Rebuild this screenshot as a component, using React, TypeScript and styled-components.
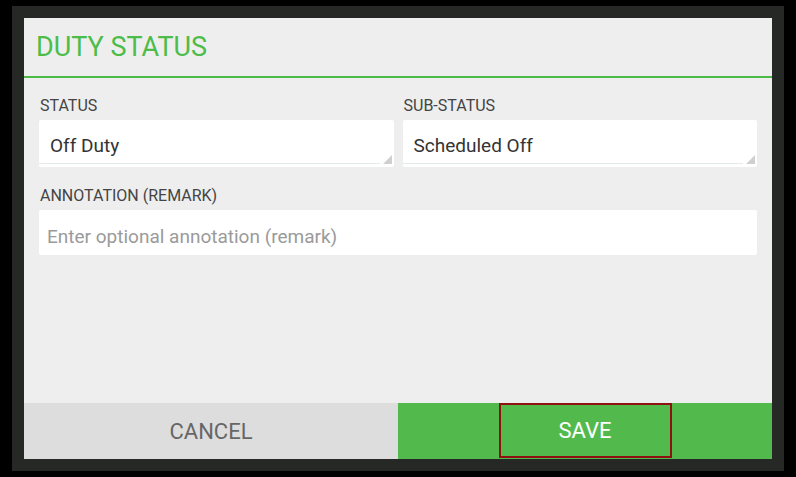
import styled, { createGlobalStyle } from 'styled-components';

const GlobalStyle = createGlobalStyle`
  html, body {
    margin: 0;
    padding: 0;
    background: #000;
    font-family: Roboto, "Liberation Sans", sans-serif;
  }
`;

const StyledScreen = styled.div`
  width: 796px;
  height: 477px;
  background: #000;
  padding: 6px 12px;
  box-sizing: border-box;
`;

const StyledFrame = styled.div`
  width: 772px;
  height: 465px;
  background: #262826;
  padding: 12px;
  box-sizing: border-box;
`;

const StyledDialog = styled.div`
  display: flex;
  flex-direction: column;
  height: 441px;
  background: #eeeeee;
`;

const StyledHeader = styled.h1`
  margin: 0;
  height: 58px;
  line-height: 58px;
  padding-left: 12px;
  border-bottom: 2px solid #4cba47;
  color: #4cbd49;
  font-size: 27px;
  font-weight: 400;
`;

const StyledBody = styled.div`
  flex: 1;
  padding: 18px 15px 0;
  display: flex;
  flex-direction: column;
  gap: 19px;
`;

const StyledRow = styled.div<{ $cols: number }>`
  display: grid;
  grid-template-columns: repeat(${({ $cols }) => $cols}, 1fr);
  column-gap: 9px;
`;

const StyledField = styled.div`
  display: flex;
  flex-direction: column;
  gap: 4px;
`;

const StyledLabel = styled.label`
  font-size: 16px;
  line-height: 20px;
  color: #444444;
  padding-left: 1px;
`;

const StyledSelect = styled.div`
  position: relative;
  height: 47px;
  box-sizing: border-box;
  padding: 4px 0 0 11px;
  line-height: 43px;
  background: #fff;
  border-radius: 2px;
  font-size: 19px;
  color: #333;

  &::before {
    content: '';
    position: absolute;
    left: 0;
    right: 14px;
    bottom: 3px;
    height: 1px;
    background: #e4eceb;
  }

  &::after {
    content: '';
    position: absolute;
    right: 2px;
    bottom: 3px;
    width: 0;
    height: 0;
    border-left: 9px solid transparent;
    border-bottom: 9px solid #cfcfcf;
  }
`;

const StyledInput = styled.input`
  height: 45px;
  box-sizing: border-box;
  border: none;
  border-radius: 2px;
  background: #fff;
  padding: 8px 8px 0;
  font-family: inherit;
  font-size: 19px;
  color: #333;
  outline: none;

  &::placeholder {
    color: #9a9a9a;
  }
`;

const StyledActions = styled.div`
  display: grid;
  grid-template-columns: 374px 1fr;
  height: 56px;
`;

const StyledButton = styled.button<{ $primary?: boolean }>`
  display: flex;
  align-items: center;
  justify-content: center;
  border: none;
  padding: 0;
  font-family: inherit;
  font-size: 22px;
  font-weight: 400;
  background: ${({ $primary }) => ($primary ? '#52ba4c' : '#dddddd')};
  color: ${({ $primary }) => ($primary ? '#ffffff' : '#666666')};
`;

const StyledFocusRing = styled.span`
  display: flex;
  align-items: center;
  justify-content: center;
  width: 173px;
  height: 55px;
  margin-bottom: 1px;
  box-sizing: border-box;
  border: 2px solid #8e1010;
`;

const App = () => (
  <>
    <GlobalStyle />
    <StyledScreen>
      <StyledFrame>
        <StyledDialog>
          <StyledHeader>DUTY STATUS</StyledHeader>
          <StyledBody>
            <StyledRow $cols={2}>
              <StyledField>
                <StyledLabel>STATUS</StyledLabel>
                <StyledSelect>Off Duty</StyledSelect>
              </StyledField>
              <StyledField>
                <StyledLabel>SUB-STATUS</StyledLabel>
                <StyledSelect>Scheduled Off</StyledSelect>
              </StyledField>
            </StyledRow>
            <StyledRow $cols={1}>
              <StyledField>
                <StyledLabel>ANNOTATION (REMARK)</StyledLabel>
                <StyledInput placeholder="Enter optional annotation (remark)" />
              </StyledField>
            </StyledRow>
          </StyledBody>
          <StyledActions>
            <StyledButton>CANCEL</StyledButton>
            <StyledButton $primary>
              <StyledFocusRing>SAVE</StyledFocusRing>
            </StyledButton>
          </StyledActions>
        </StyledDialog>
      </StyledFrame>
    </StyledScreen>
  </>
);

export default App;
